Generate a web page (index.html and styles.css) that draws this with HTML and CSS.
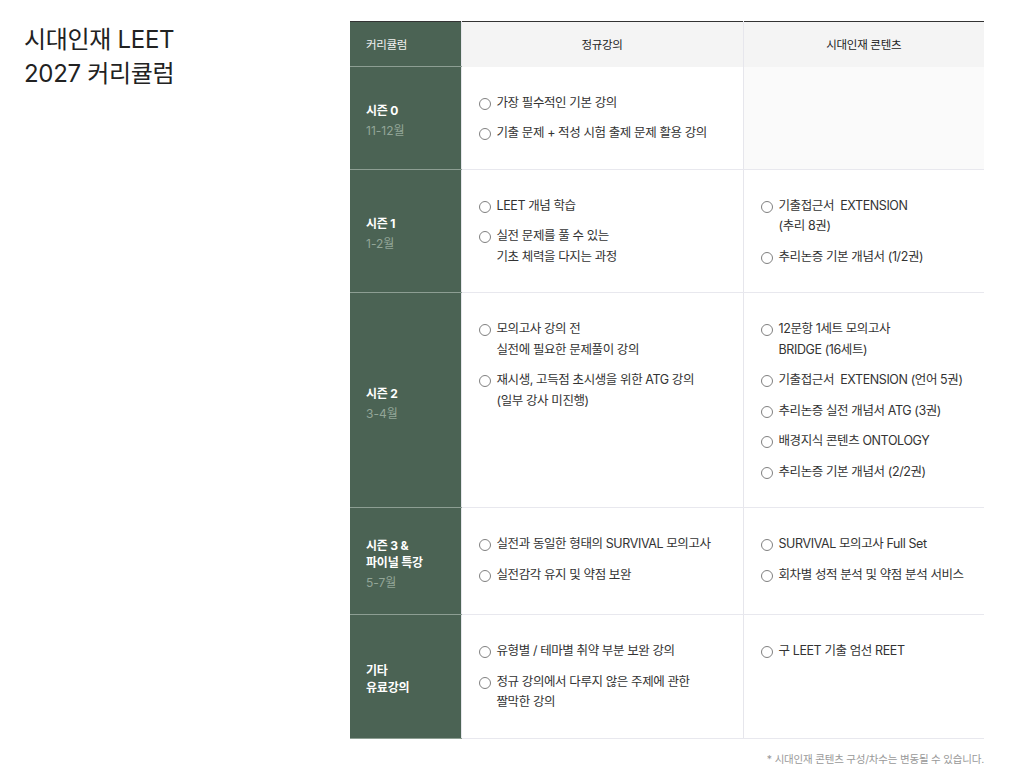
FILE: index.html
```html
<!DOCTYPE html>
<html lang="ko">
<head>
<meta charset="utf-8">
<title>시대인재 LEET 2027 커리큘럼</title>
<link rel="stylesheet" href="styles.css">
</head>
<body>
<div class="page">
  <h1 class="title">시대인재 LEET<br>2027 커리큘럼</h1>
  <div class="curriculum">
    <table class="grid">
      <colgroup>
        <col class="c1"><col class="c2"><col class="c3">
      </colgroup>
      <thead>
        <tr>
          <th class="side">커리큘럼</th>
          <th>정규강의</th>
          <th>시대인재 콘텐츠</th>
        </tr>
      </thead>
      <tbody>
        <tr>
          <td class="side"><div class="season">시즌 0</div><div class="month">11-12월</div></td>
          <td><ul class="items"><li>가장 필수적인 기본 강의</li><li>기출 문제 + 적성 시험 출제 문제 활용 강의</li></ul></td>
          <td class="empty"></td>
        </tr>
        <tr>
          <td class="side"><div class="season">시즌 1</div><div class="month">1-2월</div></td>
          <td><ul class="items"><li>LEET 개념 학습</li><li>실전 문제를 풀 수 있는<br>기초 체력을 다지는 과정</li></ul></td>
          <td><ul class="items"><li>기출접근서&nbsp; EXTENSION<br>(추리 8권)</li><li>추리논증 기본 개념서 (1/2권)</li></ul></td>
        </tr>
        <tr>
          <td class="side"><div class="season">시즌 2</div><div class="month">3-4월</div></td>
          <td><ul class="items"><li>모의고사 강의 전<br>실전에 필요한 문제풀이 강의</li><li>재시생, 고득점 초시생을 위한 ATG 강의<br>(일부 강사 미진행)</li></ul></td>
          <td><ul class="items"><li>12문항 1세트 모의고사<br>BRIDGE (16세트)</li><li>기출접근서&nbsp; EXTENSION (언어 5권)</li><li>추리논증 실전 개념서 ATG (3권)</li><li>배경지식 콘텐츠 ONTOLOGY</li><li>추리논증 기본 개념서 (2/2권)</li></ul></td>
        </tr>
        <tr>
          <td class="side"><div class="season">시즌 3 &amp;<br>파이널 특강</div><div class="month">5-7월</div></td>
          <td><ul class="items"><li>실전과 동일한 형태의 SURVIVAL 모의고사</li><li>실전감각 유지 및 약점 보완</li></ul></td>
          <td><ul class="items"><li>SURVIVAL 모의고사 Full Set</li><li>회차별 성적 분석 및 약점 분석 서비스</li></ul></td>
        </tr>
        <tr>
          <td class="side"><div class="season">기타<br>유료강의</div></td>
          <td><ul class="items"><li>유형별 / 테마별 취약 부분 보완 강의</li><li>정규 강의에서 다루지 않은 주제에 관한<br>짤막한 강의</li></ul></td>
          <td><ul class="items"><li>구 LEET 기출 엄선 REET</li></ul></td>
        </tr>
      </tbody>
    </table>
    <p class="note">* 시대인재 콘텐츠 구성/차수는 변동될 수 있습니다.</p>
  </div>
</div>
</body>
</html>
```

FILE: styles.css
```css
* { box-sizing: border-box; }
html, body { margin: 0; padding: 0; background: #fff; }
body {
  font-family: "Inter", "Noto Sans CJK KR", sans-serif;
  color: #333;
}
.page {
  display: flex;
  padding: 21px 0 0 24px;
}
.title {
  width: 326px;
  flex: none;
  margin: 2px 0 0;
  font-size: 24px;
  line-height: 34px;
  font-weight: 400;
  color: #222;
  letter-spacing: -0.3px;
}
.curriculum { width: 634px; flex: none; }
.grid {
  width: 634px;
  border-collapse: collapse;
  table-layout: fixed;
  border-top: 1px solid #333;
  font-size: 12.5px;
}
.c1 { width: 111px; }
.c2 { width: 282px; }
.c3 { width: 241px; }
.grid th {
  height: 45px;
  background: #f4f4f4;
  font-weight: 400;
  font-size: 11.5px;
  letter-spacing: -0.3px;
  color: #222;
  text-align: center;
  padding: 0;
  border-left: 1px solid #e6e6ec;
}
.grid th.side {
  text-align: left;
  padding-left: 16px;
  color: #f2f2f2;
  border-left: none;
}
.grid td {
  vertical-align: top;
  padding: 26px 12px 25px 17px;
  border-bottom: 1px solid #e8e8ee;
  border-left: 1px solid #e6e6ec;
}
.grid th.side, .grid td.side {
  background: #4b6354;
  border-bottom: 1px solid #8d9e93;
}
.grid td.side {
  vertical-align: middle;
  padding: 29px 8px 23px 16px;
  border-left: none;
}
.grid td.empty { background: #fafafa; }
.season {
  color: #fff;
  font-size: 12px;
  font-weight: 700;
  line-height: 17px;
  letter-spacing: -0.2px;
}
.month {
  margin-top: 3px;
  color: #93a698;
  font-size: 12px;
  line-height: 17px;
}
.items {
  list-style: none;
  margin: 0;
  padding: 0;
  display: flex;
  flex-direction: column;
  gap: 10px;
}
.items li {
  display: flex;
  align-items: flex-start;
  gap: 6px;
  line-height: 20.5px;
  color: #333;
  letter-spacing: -0.4px;
}
.items li::before {
  content: "";
  flex: none;
  width: 10px;
  height: 10px;
  margin-top: 5px;
  border: 1px solid #808080;
  border-radius: 50%;
}
.note {
  margin: 13px 0 0;
  text-align: right;
  font-size: 10.5px;
  line-height: 16px;
  color: #999;
  letter-spacing: -0.2px;
}
```
